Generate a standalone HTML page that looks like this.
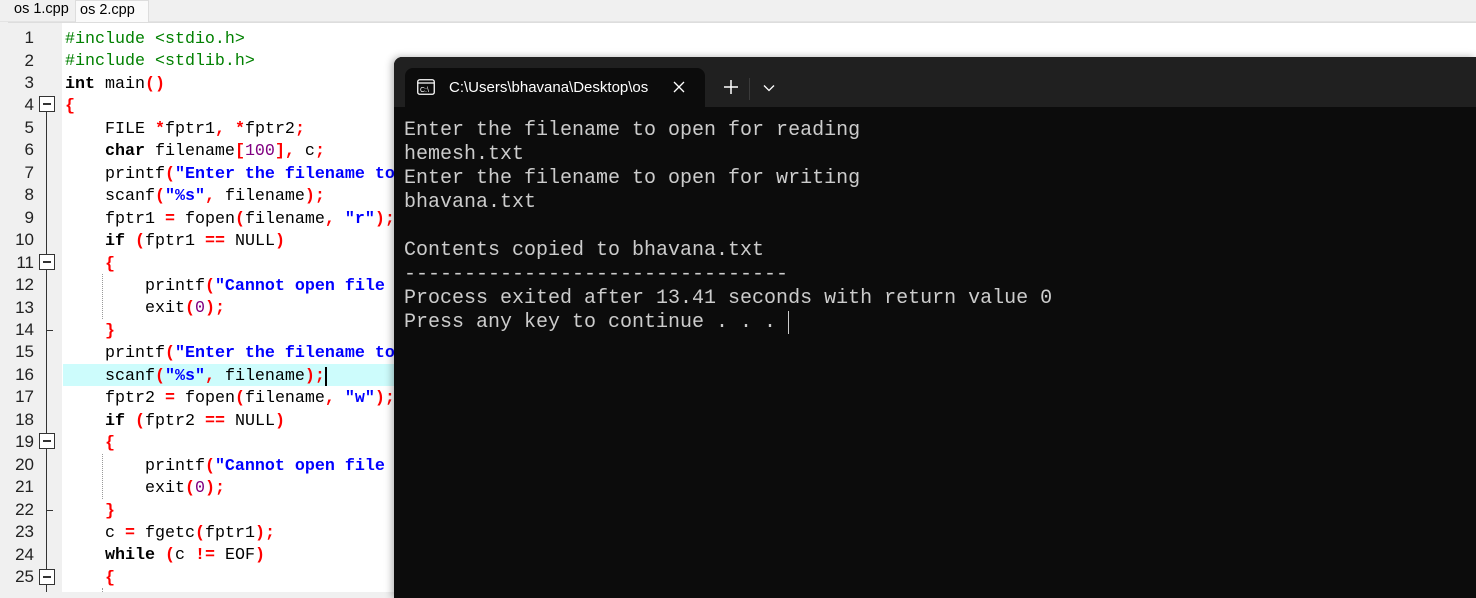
<!DOCTYPE html>
<html><head><meta charset="utf-8"><style>
*{margin:0;padding:0;box-sizing:border-box}
html{width:1476px;height:598px;overflow:hidden}
body{width:1476px;height:598px;overflow:hidden;background:#f0f0f0;position:relative;font-family:"Liberation Sans",sans-serif}
.tabs{position:absolute;left:0;top:0;width:1476px;height:22px;background:#f0f0f0;border-bottom:1px solid #e3e3e3}
.tab{position:absolute;top:0;height:22px;font-size:14.5px;line-height:19px;color:#000;padding:0 4px}
.ed{position:absolute;left:8px;top:22px;width:1468px;height:570px;background:#fff;border-top:1px solid #ddd}
.gut{position:absolute;left:8px;top:23px;width:54px;height:569px;background:#f0f0f0}
.ln{position:absolute;left:8px;width:26px;text-align:right;font-size:17px;color:#222;height:22.46px;line-height:22.46px}
.code{position:absolute;left:65px;top:29px;width:340px;height:563px;overflow:hidden;font-family:"Liberation Mono",monospace;font-size:16.67px;line-height:22.46px;color:#000}
.code div{height:22.46px;white-space:pre}
.g{color:#008000}.k{font-weight:bold}.r{color:#f00;font-weight:bold}.s{color:#0000ff;font-weight:bold}.n{color:#800080}
.hl{position:absolute;left:63px;top:364px;width:340px;height:22px;background:#cdfcfc}
.box{position:absolute;left:39px;width:16px;height:16px;border:1px solid #333;background:#fff}
.box:after{content:"";position:absolute;left:3px;top:6px;width:8px;height:1.5px;background:#333}
.vl{position:absolute;left:46px;width:1px;background:#333}
.tick{position:absolute;left:46px;width:7px;height:1px;background:#333}
.dg{position:absolute;left:102px;width:0;border-left:1px dotted #999}
.term{position:absolute;left:394px;top:57px;width:1082px;height:541px;background:#0c0c0c;border-radius:8px 0 0 0;overflow:hidden;box-shadow:-2px 0 8px rgba(0,0,0,.3)}
.tbar{position:absolute;left:0;top:0;width:100%;height:50px;background:#202020}
.ttab{position:absolute;left:11px;top:11px;width:300px;height:39px;background:#0c0c0c;border-radius:8px 8px 0 0;color:#fff;font-size:15px;line-height:39px;padding-left:44px}
.out{position:absolute;left:10px;top:62px;font-family:"Liberation Mono",monospace;font-size:20px;line-height:24px;color:#cccccc;white-space:pre}
</style></head><body>
<div class="tabs">
<div class="tab" style="left:10px;">os 1.cpp</div>
<div class="tab" style="left:75px;width:74px;background:#fafafa;border:1px solid #ddd;border-bottom:none;">os 2.cpp</div>
</div>
<div class="ed"></div>
<div class="gut"></div>
<div class="hl"></div>
<div class="vl" style="top:107px;height:485px"></div>
<div class="box" style="top:96px"></div>
<div class="box" style="top:254px"></div>
<div class="box" style="top:433px"></div>
<div class="box" style="top:569px"></div>
<div class="tick" style="top:330px"></div>
<div class="tick" style="top:510px"></div>
<div class="dg" style="top:274px;height:45px"></div>
<div class="dg" style="top:454px;height:45px"></div>
<div class="dg" style="top:588px;height:4px"></div>
<div class="code"><div><span class="g">#include &lt;stdio.h&gt;</span></div><div><span class="g">#include &lt;stdlib.h&gt;</span></div><div><span class="k">int</span> main<span class="r">()</span></div><div><span class="r">{</span></div><div>    FILE <span class="r">*</span>fptr1<span class="r">,</span> <span class="r">*</span>fptr2<span class="r">;</span></div><div>    <span class="k">char</span> filename<span class="r">[</span><span class="n">100</span><span class="r">],</span> c<span class="r">;</span></div><div>    printf<span class="r">(</span><span class="s">"Enter the filename to open for reading\n"</span><span class="r">);</span></div><div>    scanf<span class="r">(</span><span class="s">"%s"</span><span class="r">,</span> filename<span class="r">);</span></div><div>    fptr1 <span class="r">=</span> fopen<span class="r">(</span>filename<span class="r">,</span> <span class="s">"r"</span><span class="r">);</span></div><div>    <span class="k">if</span> <span class="r">(</span>fptr1 <span class="r">==</span> NULL<span class="r">)</span></div><div>    <span class="r">{</span></div><div>        printf<span class="r">(</span><span class="s">"Cannot open file %s \n"</span><span class="r">);</span></div><div>        exit<span class="r">(</span><span class="n">0</span><span class="r">);</span></div><div>    <span class="r">}</span></div><div>    printf<span class="r">(</span><span class="s">"Enter the filename to open for writing\n"</span><span class="r">);</span></div><div>    scanf<span class="r">(</span><span class="s">"%s"</span><span class="r">,</span> filename<span class="r">);</span><span style="border-left:2px solid #000"></span></div><div>    fptr2 <span class="r">=</span> fopen<span class="r">(</span>filename<span class="r">,</span> <span class="s">"w"</span><span class="r">);</span></div><div>    <span class="k">if</span> <span class="r">(</span>fptr2 <span class="r">==</span> NULL<span class="r">)</span></div><div>    <span class="r">{</span></div><div>        printf<span class="r">(</span><span class="s">"Cannot open file %s \n"</span><span class="r">);</span></div><div>        exit<span class="r">(</span><span class="n">0</span><span class="r">);</span></div><div>    <span class="r">}</span></div><div>    c <span class="r">=</span> fgetc<span class="r">(</span>fptr1<span class="r">);</span></div><div>    <span class="k">while</span> <span class="r">(</span>c <span class="r">!=</span> EOF<span class="r">)</span></div><div>    <span class="r">{</span></div></div>
<div class="ln" style="top:27px">1</div><div class="ln" style="top:49.5px">2</div><div class="ln" style="top:71.9px">3</div><div class="ln" style="top:94.4px">4</div><div class="ln" style="top:116.8px">5</div><div class="ln" style="top:139.3px">6</div><div class="ln" style="top:161.8px">7</div><div class="ln" style="top:184.2px">8</div><div class="ln" style="top:206.7px">9</div><div class="ln" style="top:229.1px">10</div><div class="ln" style="top:251.6px">11</div><div class="ln" style="top:274.1px">12</div><div class="ln" style="top:296.5px">13</div><div class="ln" style="top:319px">14</div><div class="ln" style="top:341.4px">15</div><div class="ln" style="top:363.9px">16</div><div class="ln" style="top:386.4px">17</div><div class="ln" style="top:408.8px">18</div><div class="ln" style="top:431.3px">19</div><div class="ln" style="top:453.7px">20</div><div class="ln" style="top:476.2px">21</div><div class="ln" style="top:498.7px">22</div><div class="ln" style="top:521.1px">23</div><div class="ln" style="top:543.6px">24</div><div class="ln" style="top:566px">25</div>
<div style="position:absolute;left:0;top:592px;width:1476px;height:6px;background:#f0f0f0"></div>
<div class="term">
<div class="tbar"></div>
<div class="ttab">C:\Users\bhavana\Desktop\os
<svg style="position:absolute;left:12px;top:11px" width="18" height="16" viewBox="0 0 18 16"><rect x="0.75" y="0.75" width="16.5" height="14.5" rx="2" fill="none" stroke="#fff" stroke-width="1.3"/><line x1="1" y1="4" x2="17" y2="4" stroke="#fff" stroke-width="1.2"/><text x="3" y="13" font-size="7" fill="#fff" font-family="Liberation Sans">C:\</text></svg>
<svg style="position:absolute;left:268px;top:13px" width="12" height="12" viewBox="0 0 12 12"><path d="M1 1L11 11M11 1L1 11" stroke="#fff" stroke-width="1.3"/></svg>
</div>
<svg style="position:absolute;left:330px;top:23px" width="14" height="14" viewBox="0 0 14 14"><path d="M7 0V14M0 7H14" stroke="#fff" stroke-width="1.5"/></svg>
<div style="position:absolute;left:355px;top:21px;width:1px;height:22px;background:#3a3a3a"></div>
<svg style="position:absolute;left:369px;top:27px" width="12" height="8" viewBox="0 0 12 8"><path d="M1 1.5L6 6.5L11 1.5" stroke="#fff" stroke-width="1.3" fill="none"/></svg>
<div class="out">Enter the filename to open for reading
hemesh.txt
Enter the filename to open for writing
bhavana.txt

Contents copied to bhavana.txt
--------------------------------
Process exited after 13.41 seconds with return value 0
Press any key to continue . . . <span style="border-left:1.5px solid #ccc"></span></div>
</div>
</body></html>
